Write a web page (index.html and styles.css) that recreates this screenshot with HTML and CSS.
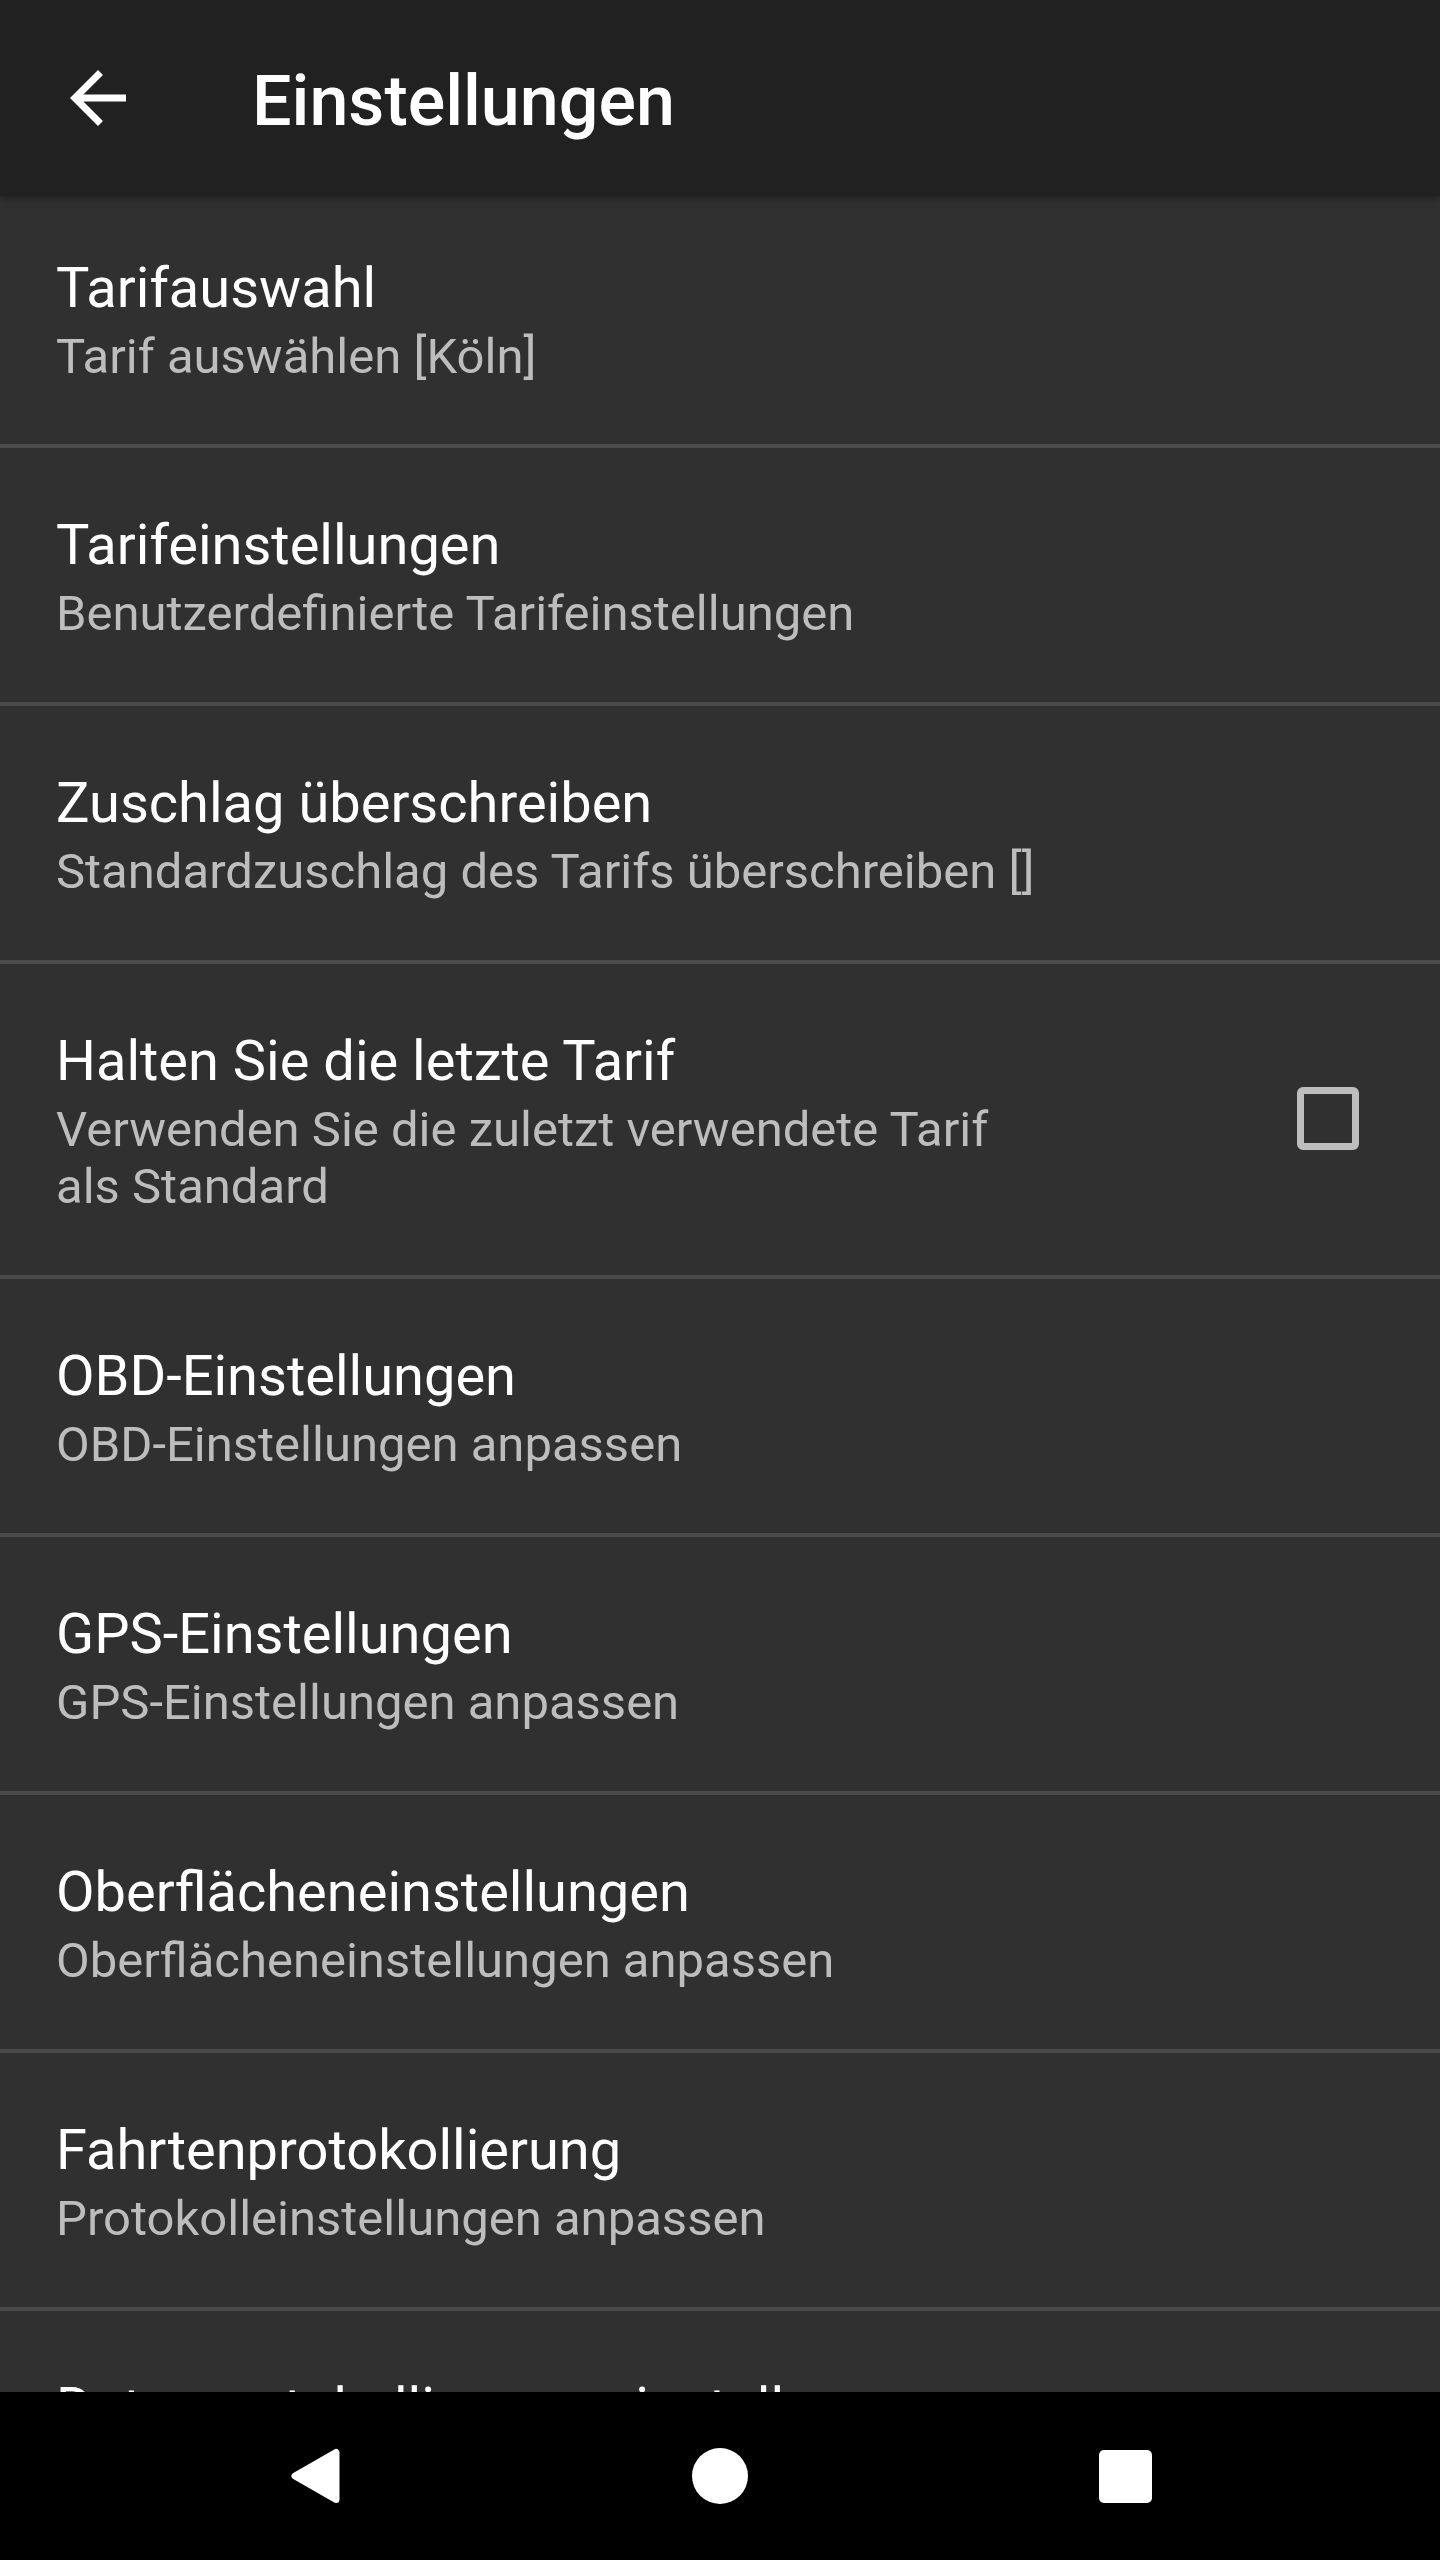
FILE: index.html
```html
<!DOCTYPE html>
<html lang="de">
  <head>
    <meta charset="UTF-8" />
    <meta name="viewport" content="width=device-width, initial-scale=1.0" />
    <title>Einstellungen</title>
    <link rel="stylesheet" href="styles.css">
  </head>
  <body>
    <div class="screen">
      <header class="appbar">
        <button type="button" class="back" aria-label="Zurück">
          <svg viewBox="0 0 24 24" width="84" height="84">
            <path d="M20 11H7.83l5.59-5.59L12 4l-8 8 8 8 1.41-1.41L7.83 13H20v-2z" fill="#fff" />
          </svg>
        </button>
        <h1 class="appbar-title">Einstellungen</h1>
      </header>

      <main class="prefs">
        <div class="pref">
          <div class="pref-text">
            <div class="pref-title">Tarifauswahl</div>
            <div class="pref-summary">Tarif auswählen [Köln]</div>
          </div>
        </div>
        <div class="pref">
          <div class="pref-text">
            <div class="pref-title">Tarifeinstellungen</div>
            <div class="pref-summary">Benutzerdefinierte Tarifeinstellungen</div>
          </div>
        </div>
        <div class="pref">
          <div class="pref-text">
            <div class="pref-title">Zuschlag überschreiben</div>
            <div class="pref-summary">Standardzuschlag des Tarifs überschreiben []</div>
          </div>
        </div>
        <div class="pref">
          <div class="pref-text pref-text--narrow">
            <div class="pref-title">Halten Sie die letzte Tarif</div>
            <div class="pref-summary">Verwenden Sie die zuletzt verwendete Tarif als Standard</div>
          </div>
          <span class="checkbox"></span>
        </div>
        <div class="pref">
          <div class="pref-text">
            <div class="pref-title">OBD-Einstellungen</div>
            <div class="pref-summary">OBD-Einstellungen anpassen</div>
          </div>
        </div>
        <div class="pref">
          <div class="pref-text">
            <div class="pref-title">GPS-Einstellungen</div>
            <div class="pref-summary">GPS-Einstellungen anpassen</div>
          </div>
        </div>
        <div class="pref">
          <div class="pref-text">
            <div class="pref-title">Oberflächeneinstellungen</div>
            <div class="pref-summary">Oberflächeneinstellungen anpassen</div>
          </div>
        </div>
        <div class="pref">
          <div class="pref-text">
            <div class="pref-title">Fahrtenprotokollierung</div>
            <div class="pref-summary">Protokolleinstellungen anpassen</div>
          </div>
        </div>
        <div class="pref">
          <div class="pref-text">
            <div class="pref-title">Datenprotokollierungseinstellungen</div>
            <div class="pref-summary">Datenprotokollierung anpassen</div>
          </div>
        </div>
      </main>

      <nav class="navbar">
        <span class="nav-btn">
          <svg width="49" height="56" viewBox="0 0 49 56">
            <polygon points="4,28 45,4.5 45,51.5" fill="#fff" stroke="#fff" stroke-width="7" stroke-linejoin="round" />
          </svg>
        </span>
        <span class="nav-btn"><span class="nav-home"></span></span>
        <span class="nav-btn"><span class="nav-recent"></span></span>
      </nav>
    </div>
  </body>
</html>
```

FILE: styles.css
```css
/*********** Base ***********/
* {
  box-sizing: border-box;
}

body {
  margin: 0;
  background-color: #303030;
  font-family: Roboto, "Noto Sans", sans-serif;
}

.screen {
  display: flex;
  flex-direction: column;
  height: 2560px;
  overflow: hidden;
}

/*********** App bar ***********/
.appbar {
  position: relative;
  z-index: 1;
  display: flex;
  align-items: center;
  flex: none;
  height: 196px;
  padding-left: 56px;
  background-color: #212121;
  box-shadow: 0 2px 8px rgba(0, 0, 0, 0.35);
}

.back {
  display: flex;
  padding: 0;
  border: none;
  background: transparent;
}

.appbar-title {
  margin: 6px 0 0 112px;
  color: #fff;
  font-size: 70px;
  font-weight: 500;
  line-height: 82px;
}

/*********** Preference list ***********/
.prefs {
  flex: 1;
  overflow: hidden;
}

.pref {
  display: flex;
  align-items: center;
  padding: 64px 56px 60px 56px;
  border-bottom: 4px solid #4a4a4a;
}

.pref:first-child {
  padding-top: 59px;
  padding-bottom: 59px;
}

.pref-text {
  flex: 1;
}

.pref-text--narrow {
  max-width: 980px;
}

.pref-title {
  color: #fff;
  font-size: 56px;
  line-height: 66px;
}

.pref-summary {
  margin-top: 7px;
  color: #bdbdbd;
  font-size: 49px;
  line-height: 57px;
}

.checkbox {
  flex: none;
  width: 62px;
  height: 63px;
  margin: -6px 25px 0 auto;
  border: 7px solid #bdbdbd;
  border-radius: 6px;
}

/*********** System nav bar ***********/
.navbar {
  display: flex;
  justify-content: center;
  align-items: center;
  flex: none;
  height: 168px;
  background-color: #000;
}

.nav-btn {
  display: flex;
  justify-content: center;
  align-items: center;
  width: 405px;
}

.nav-home {
  width: 56px;
  height: 56px;
  border-radius: 50%;
  background-color: #fff;
}

.nav-recent {
  width: 53px;
  height: 53px;
  border-radius: 5px;
  background-color: #fff;
}
```
